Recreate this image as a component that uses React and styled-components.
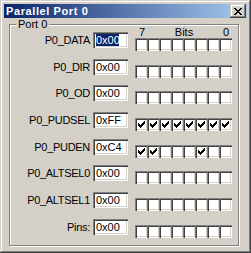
import React from 'react';
import styled, { createGlobalStyle } from 'styled-components';

const FACE = '#D4D0C8';

const GlobalStyle = createGlobalStyle`
  html, body {
    margin: 0;
    padding: 0;
    background: ${FACE};
  }
  * {
    box-sizing: border-box;
  }
`;

const Window = styled.div`
  width: 251px;
  height: 253px;
  padding: 4px;
  display: flex;
  flex-direction: column;
  background: ${FACE};
  box-shadow:
    inset -1px -1px 0 #404040,
    inset 1px 1px 0 ${FACE},
    inset -2px -2px 0 #808080,
    inset 2px 2px 0 #ffffff;
  font-family: "Liberation Sans", Arial, sans-serif;
  font-size: 11px;
  color: #000;
`;

const TitleBar = styled.div`
  height: 18px;
  display: flex;
  align-items: center;
  justify-content: space-between;
  padding: 0 1px 0 2px;
  background: linear-gradient(to right, #0A246A, #A6CAF0);
`;

const Title = styled.span`
  color: #fff;
  font-weight: bold;
  font-size: 11px;
  letter-spacing: 0.6px;
  line-height: 14px;
`;

const CloseButton = styled.div`
  width: 16px;
  height: 14px;
  display: flex;
  align-items: center;
  justify-content: center;
  background: ${FACE};
  box-shadow:
    inset -1px -1px 0 #404040,
    inset 1px 1px 0 ${FACE},
    inset -2px -2px 0 #808080,
    inset 2px 2px 0 #ffffff;
`;

const Body = styled.div`
  flex: 1;
  display: flex;
  padding: 6px 8px 5px 5px;
`;

const GroupBox = styled.div`
  flex: 1;
  position: relative;
  padding-top: 2px;
  border: 1px solid #808080;
  box-shadow: inset 1px 1px 0 #fff, 1px 1px 0 #fff;
`;

const Legend = styled.span`
  position: absolute;
  top: -7px;
  left: 6px;
  padding: 0 2px;
  line-height: 13px;
  background: ${FACE};
`;

const BitsHeader = styled.div`
  display: flex;
  justify-content: space-between;
  width: 96px;
  height: 11px;
  line-height: 11px;
  margin: 0 0 -6px 125px;
  padding: 0 2px 0 4px;
`;

const Row = styled.div`
  display: flex;
  align-items: flex-start;
  height: 26.667px;
`;

const Label = styled.span`
  width: 80px;
  margin-right: 3px;
  text-align: right;
  line-height: 16px;
  letter-spacing: -0.3px;
  white-space: nowrap;
`;

const Field = styled.div`
  width: 35px;
  height: 16px;
  margin-right: 7px;
  padding: 2px 0 0 3px;
  overflow: hidden;
  background: #fff;
  line-height: 12px;
  white-space: nowrap;
  box-shadow:
    inset 1px 1px 0 #808080,
    inset 2px 2px 0 #404040,
    inset -1px -1px 0 #fff,
    inset -2px -2px 0 ${FACE};
`;

const Selected = styled.span`
  display: inline-block;
  width: 23px;
  overflow: hidden;
  background: #0A246A;
  color: #fff;
`;

const Bits = styled.div`
  display: flex;
  margin-top: 6px;
`;

const Check = styled.span`
  position: relative;
  width: 13px;
  height: 13px;
  margin-right: -1px;
  background: #fff;
  box-shadow:
    inset 1px 1px 0 #808080,
    inset 2px 2px 0 #404040,
    inset -1px -1px 0 #fff,
    inset -2px -2px 0 ${FACE};

  &:last-child {
    margin-right: 0;
  }

  svg {
    position: absolute;
    left: 3px;
    top: 3px;
  }
`;

function CloseGlyph() {
  return (
    <svg width="8" height="7" viewBox="0 0 8 7" shapeRendering="crispEdges">
      <path
        fill="#000"
        d="M0 0h2v1h-2zM6 0h2v1h-2zM1 1h2v1h-2zM5 1h2v1h-2zM2 2h4v1h-4zM3 3h2v1h-2zM2 4h4v1h-4zM1 5h2v1h-2zM5 5h2v1h-2zM0 6h2v1h-2zM6 6h2v1h-2z"
      />
    </svg>
  );
}

function CheckGlyph() {
  return (
    <svg width="7" height="7" viewBox="0 0 7 7" shapeRendering="crispEdges">
      <path
        fill="#000"
        d="M6 0h1v1h-1zM5 1h2v1h-2zM0 2h1v1h-1zM4 2h3v1h-3zM0 3h2v1h-2zM3 3h3v1h-3zM0 4h5v1h-5zM1 5h3v1h-3zM2 6h1v1h-1z"
      />
    </svg>
  );
}

const registers = [
  { name: 'P0_DATA', value: 0x00, selected: true },
  { name: 'P0_DIR', value: 0x00 },
  { name: 'P0_OD', value: 0x00 },
  { name: 'P0_PUDSEL', value: 0xff },
  { name: 'P0_PUDEN', value: 0xc4 },
  { name: 'P0_ALTSEL0', value: 0x00 },
  { name: 'P0_ALTSEL1', value: 0x00 },
  { name: 'Pins:', value: 0x00 },
];

const hex = v => '0x' + v.toString(16).toUpperCase().padStart(2, '0');

function Register({ name, value, selected }) {
  const bits = [7, 6, 5, 4, 3, 2, 1, 0];
  return (
    <Row>
      <Label>{name}</Label>
      <Field>{selected ? <Selected>{hex(value)}</Selected> : hex(value)}</Field>
      <Bits>
        {bits.map(b => (
          <Check key={b}>{(value >> b) & 1 ? <CheckGlyph /> : null}</Check>
        ))}
      </Bits>
    </Row>
  );
}

export default function App() {
  return (
    <Window>
      <GlobalStyle />
      <TitleBar>
        <Title>Parallel Port 0</Title>
        <CloseButton>
          <CloseGlyph />
        </CloseButton>
      </TitleBar>
      <Body>
        <GroupBox>
          <Legend>Port 0</Legend>
          <BitsHeader>
            <span>7</span>
            <span>Bits</span>
            <span>0</span>
          </BitsHeader>
          {registers.map(r => (
            <Register key={r.name} {...r} />
          ))}
        </GroupBox>
      </Body>
    </Window>
  );
}
